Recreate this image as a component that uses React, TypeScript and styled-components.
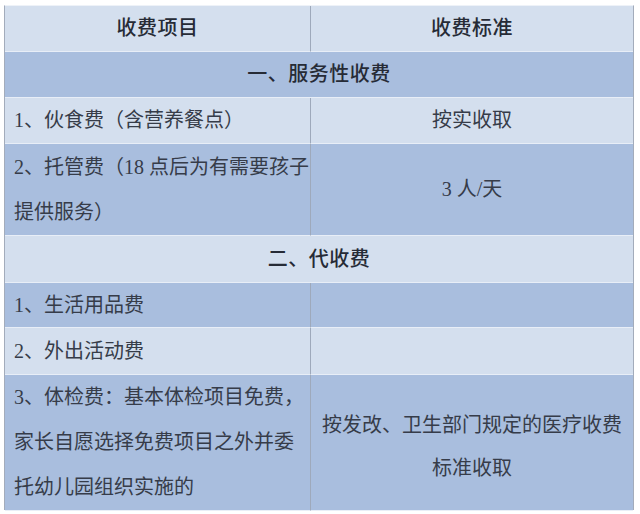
import React from "react";
import styled, { createGlobalStyle } from "styled-components";

const Global = createGlobalStyle`
  html, body { margin: 0; padding: 0; background: #ffffff; }
  body { font-family: "Liberation Serif", "Noto Sans CJK SC", serif; }
`;

const Page = styled.div`
  width: 640px;
  height: 514px;
  padding: 5px 6px 4px 4px;
  box-sizing: border-box;
  background: #ffffff;
`;

const Table = styled.div`
  display: grid;
  grid-template-columns: 306px 1fr;
  grid-template-rows: 46px 46px 46px 92px 47px 45px 47px 136px;
  border-left: 1px solid #a3acbb;
  border-right: 1px solid #a3acbb;
  border-top: 1px solid #eef2f8;
  box-sizing: border-box;
  height: 505px;
  font-size: 20px;
  color: #323845;
`;

type Tone = "light" | "dark";

const Cell = styled.div<{
  $tone: Tone;
  $align?: "left" | "center";
  $span?: boolean;
  $strong?: boolean;
  $divider?: boolean;
}>`
  display: flex;
  align-items: center;
  justify-content: ${(p) => (p.$align === "left" ? "flex-start" : "center")};
  text-align: ${(p) => (p.$align === "left" ? "left" : "center")};
  padding: ${(p) => (p.$align === "left" ? "0 0 0 9px" : "0")};
  grid-column: ${(p) => (p.$span ? "1 / span 2" : "auto")};
  background: ${(p) => (p.$tone === "light" ? "#d4dfee" : "#a9bede")};
  border-bottom: 1px solid #e8eef7;
  border-right: ${(p) => (p.$divider ? "1px solid #9ea9bb" : "none")};
  box-sizing: border-box;
  line-height: 45px;
  white-space: nowrap;
  color: ${(p) => (p.$strong ? "#262b36" : "#363c49")};
  font-weight: ${(p) => (p.$strong ? 500 : 400)};
  letter-spacing: ${(p) => (p.$strong ? "0.5px" : "0")};
`;

const LeftText = styled.div``;

const RightText = styled.div`
  line-height: 43px;
  padding-top: 8px;
`;

export default function App() {
  return (
    <>
      <Global />
      <Page>
        <Table>
          <Cell $tone="light" $strong $divider>收费项目</Cell>
          <Cell $tone="light" $strong>收费标准</Cell>

          <Cell $tone="dark" $span $strong>一、服务性收费</Cell>

          <Cell $tone="light" $align="left" $divider>1、伙食费（含营养餐点）</Cell>
          <Cell $tone="light">按实收取</Cell>

          <Cell $tone="dark" $align="left" $divider>
            <LeftText>
              2、托管费（18 点后为有需要孩子
              <br />
              提供服务）
            </LeftText>
          </Cell>
          <Cell $tone="dark">3 人/天</Cell>

          <Cell $tone="light" $span $strong>二、代收费</Cell>

          <Cell $tone="dark" $align="left" $divider>1、生活用品费</Cell>
          <Cell $tone="dark"></Cell>

          <Cell $tone="light" $align="left" $divider>2、外出活动费</Cell>
          <Cell $tone="light"></Cell>

          <Cell $tone="dark" $align="left" $divider>
            <LeftText>
              3、体检费：基本体检项目免费，
              <br />
              家长自愿选择免费项目之外并委
              <br />
              托幼儿园组织实施的
            </LeftText>
          </Cell>
          <Cell $tone="dark">
            <RightText>
              按发改、卫生部门规定的医疗收费
              <br />
              标准收取
            </RightText>
          </Cell>
        </Table>
      </Page>
    </>
  );
}
